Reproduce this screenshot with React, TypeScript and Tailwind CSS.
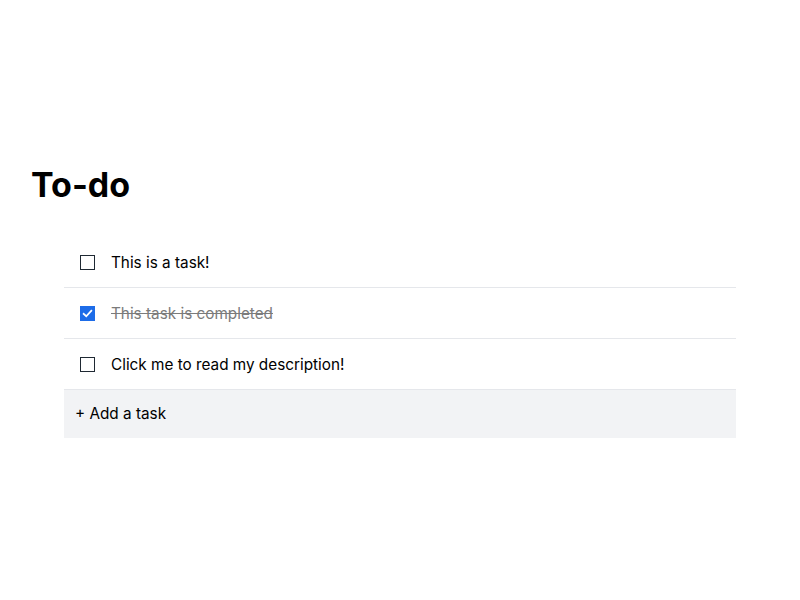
import React, { useState } from "react";

type Task = { id: number; title: string; done: boolean };

function Check({ checked }: { checked: boolean }) {
  return checked ? (
    <span className="flex h-[15px] w-[15px] shrink-0 items-center justify-center bg-[#1d6ce8]">
      <svg viewBox="0 0 16 16" className="h-[11px] w-[11px]">
        <path d="M2.5 8.5 L6.2 12 L13.5 4.2" fill="none" stroke="white" strokeWidth="2.6" strokeLinecap="square" />
      </svg>
    </span>
  ) : (
    <span className="block h-[15px] w-[15px] shrink-0 border border-[#1f2933] bg-white" />
  );
}

export default function App() {
  const [tasks, setTasks] = useState<Task[]>([
    { id: 1, title: "This is a task!", done: false },
    { id: 2, title: "This task is completed", done: true },
    { id: 3, title: "Click me to read my description!", done: false },
  ]);
  const toggle = (id: number) =>
    setTasks((t) => t.map((x) => (x.id === id ? { ...x, done: !x.done } : x)));

  return (
    <div className="min-h-screen bg-white px-8 pt-[153px] text-black" style={{ fontFamily: "Inter, 'Noto Sans', sans-serif" }}>
      <h1 className="-ml-px text-[34px] font-bold leading-[64px]">To-do</h1>
      <div className="mx-8 mt-[20px]">
        {tasks.map((t) => (
          <div
            key={t.id}
            onClick={() => toggle(t.id)}
            className="flex h-[51px] cursor-pointer items-center gap-4 border-b border-[#e5e7eb] pl-4 pr-4"
          >
            <Check checked={t.done} />
            <span className={t.done ? "pt-[2px] text-[15.3px] text-[#7b7b7b] line-through" : "pt-[2px] text-[15.3px]"}>{t.title}</span>
          </div>
        ))}
        <div className="flex h-[48px] items-center bg-[#f2f3f5] pl-[11px] pr-3 pt-[1px] text-[15.3px]">+ Add a task</div>
      </div>
    </div>
  );
}
